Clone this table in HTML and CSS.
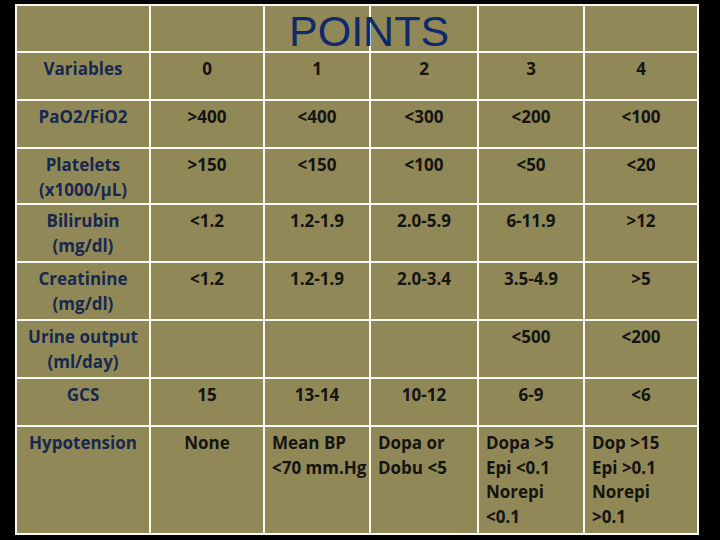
FILE: index.html
```html
<!DOCTYPE html>
<html>
<head>
<meta charset="utf-8">
<link rel="stylesheet" href="styles.css">
</head>
<body>
<div class="wrap">
  <table class="score">
    <colgroup>
      <col class="c0"><col class="c1"><col class="c2"><col class="c3"><col class="c4"><col class="c5">
    </colgroup>
    <tr class="r-head"><td></td><td></td><td></td><td></td><td></td><td></td></tr>
    <tr class="r-a"><td class="lab">Variables</td><td>0</td><td>1</td><td>2</td><td>3</td><td>4</td></tr>
    <tr class="r-b"><td class="lab">PaO2/FiO2</td><td>&gt;400</td><td>&lt;400</td><td>&lt;300</td><td>&lt;200</td><td>&lt;100</td></tr>
    <tr class="r-c"><td class="lab">Platelets<br>(x1000/µL)</td><td>&gt;150</td><td>&lt;150</td><td>&lt;100</td><td>&lt;50</td><td>&lt;20</td></tr>
    <tr class="r-d"><td class="lab">Bilirubin<br>(mg/dl)</td><td>&lt;1.2</td><td>1.2-1.9</td><td>2.0-5.9</td><td>6-11.9</td><td>&gt;12</td></tr>
    <tr class="r-e"><td class="lab">Creatinine<br>(mg/dl)</td><td>&lt;1.2</td><td>1.2-1.9</td><td>2.0-3.4</td><td>3.5-4.9</td><td>&gt;5</td></tr>
    <tr class="r-f"><td class="lab">Urine output<br>(ml/day)</td><td></td><td></td><td></td><td>&lt;500</td><td>&lt;200</td></tr>
    <tr class="r-g"><td class="lab">GCS</td><td>15</td><td>13-14</td><td>10-12</td><td>6-9</td><td>&lt;6</td></tr>
    <tr class="r-h"><td class="lab">Hypotension</td><td>None</td><td class="left">Mean BP<br>&lt;70 mm.Hg</td><td class="left">Dopa or<br>Dobu &lt;5</td><td class="left">Dopa &gt;5<br>Epi &lt;0.1<br>Norepi<br>&lt;0.1</td><td class="left">Dop &gt;15<br>Epi &gt;0.1<br>Norepi<br>&gt;0.1</td></tr>
  </table>
  <div class="title">POINTS</div>
</div>
</body>
</html>
```

FILE: styles.css
```css
html, body {
  margin: 0;
  padding: 0;
  background: #000;
  width: 720px;
  height: 540px;
  overflow: hidden;
}
.wrap {
  position: relative;
  margin: 4px 0 0 15px;
  width: 686px;
}
.score {
  border-collapse: collapse;
  table-layout: fixed;
  width: 684px;
  font-family: "Open Sans", "Liberation Sans", sans-serif;
  font-weight: 700;
  font-size: 17px;
  line-height: 24.5px;
  color: #141410;
}
.c0 { width: 134px; }
.c1 { width: 114px; }
.c2 { width: 106px; }
.c3 { width: 108px; }
.c4 { width: 106px; }
.c5 { width: 114px; }
.score td {
  background: #918857;
  border: 2px solid #fbfaf2;
  text-align: center;
  vertical-align: top;
  padding: 4px 2px 0;
}
.score td.lab { color: #16284f; }
.score td.left { text-align: left; padding-left: 7px; }
.r-head td { padding: 0; }
.r-head { height: 47px; }
.r-a { height: 48px; }
.r-b { height: 48px; }
.r-c { height: 56px; }
.r-d { height: 58px; }
.r-e { height: 58px; }
.r-f { height: 58px; }
.r-g { height: 48px; }
.r-h { height: 108px; }
.title {
  position: absolute;
  top: 3px;
  left: 274px;
  font-family: "Liberation Sans", Arial, sans-serif;
  font-size: 43px;
  line-height: 48px;
  color: #0e2a6a;
}
```
